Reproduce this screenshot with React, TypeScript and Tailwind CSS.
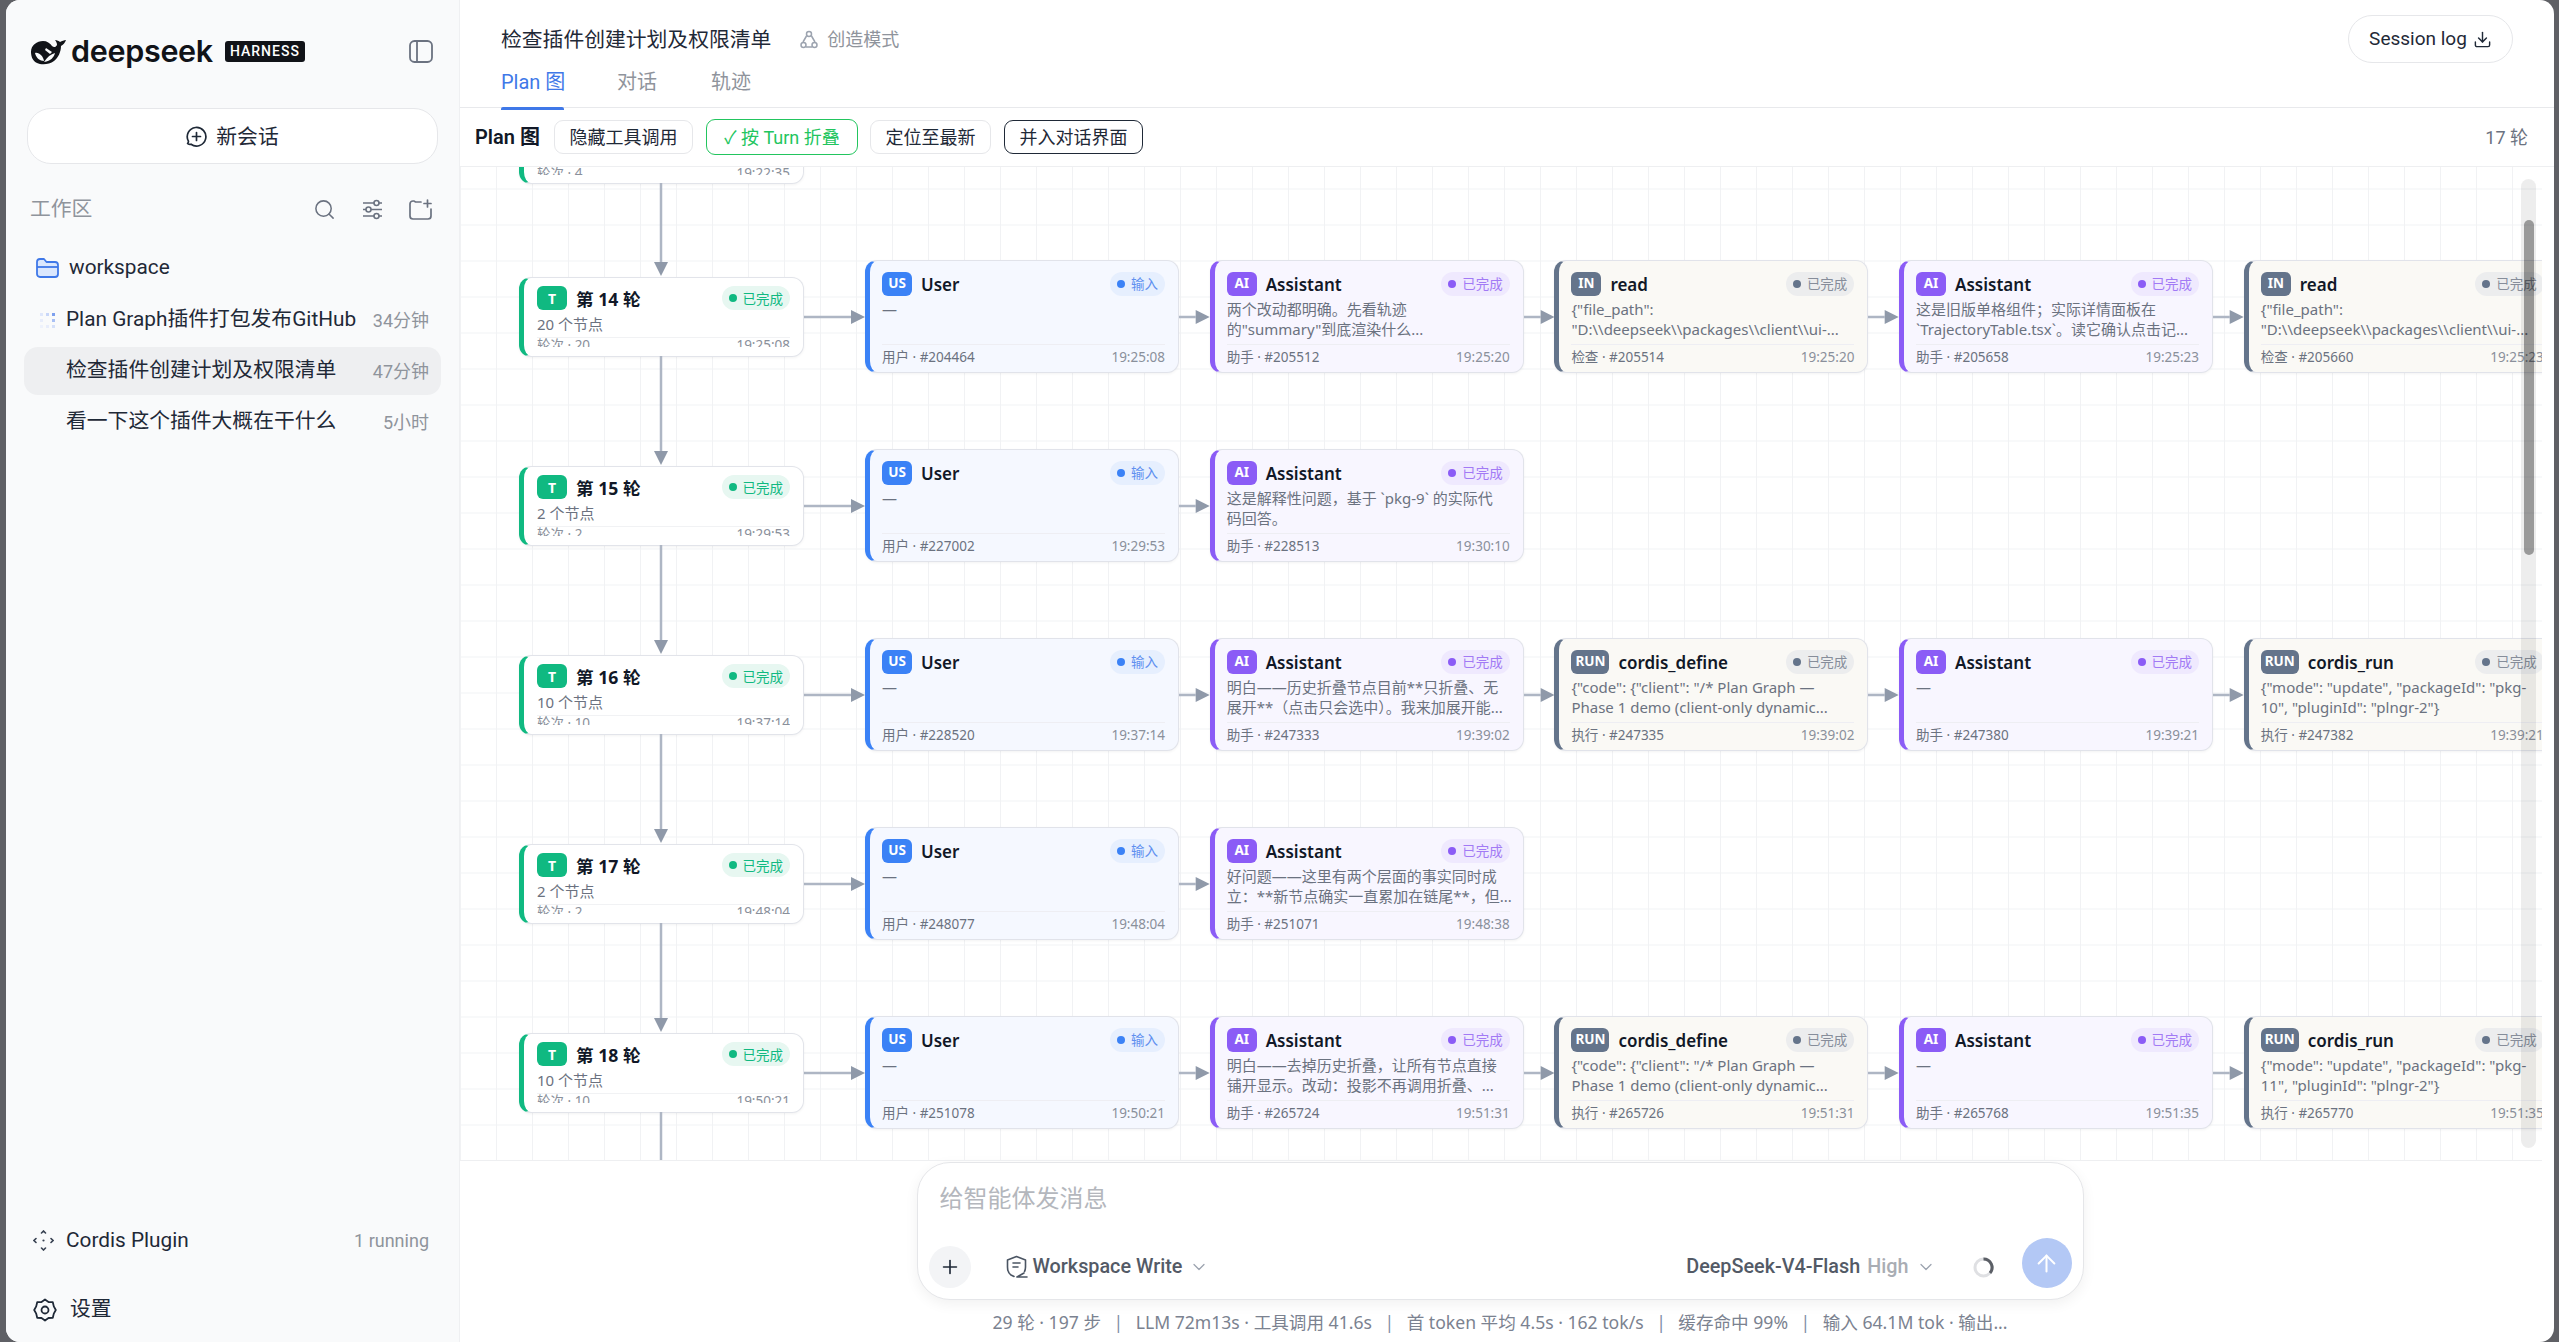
import { Download, Search, ChevronDown, Plus, ArrowUp } from "lucide-react";

type Kind = "user" | "ai" | "tool";

interface Step {
  kind: Kind;
  tag: string;
  title: string;
  lines: string[];
  label: string;
  id: string;
  time: string;
}

interface Turn {
  n: number;
  nodes: number;
  time: string;
  steps: Step[];
}

const kindStyles = {
  user: {
    card: "bg-[#f5f8ff] border-l-[#3b82f6]",
    tag: "bg-[#3b82f6]",
    pill: "bg-[#e6effe] text-[#5f8ff0]",
    dot: "bg-[#3b82f6]",
    status: "输入",
  },
  ai: {
    card: "bg-[#f8f6ff] border-l-[#8b5cf6]",
    tag: "bg-[#8b5cf6]",
    pill: "bg-[#efe9fe] text-[#a27af5]",
    dot: "bg-[#8b5cf6]",
    status: "已完成",
  },
  tool: {
    card: "bg-[#faf9f5] border-l-[#64748b]",
    tag: "bg-[#64748b]",
    pill: "bg-[#ecedee] text-[#868d9a]",
    dot: "bg-[#64748b]",
    status: "已完成",
  },
};

const user = (id: string, time: string): Step => ({
  kind: "user",
  tag: "US",
  title: "User",
  lines: ["—"],
  label: "用户",
  id,
  time,
});

const ai = (lines: string[], id: string, time: string): Step => ({
  kind: "ai",
  tag: "AI",
  title: "Assistant",
  lines,
  label: "助手",
  id,
  time,
});

const read = (id: string, time: string): Step => ({
  kind: "tool",
  tag: "IN",
  title: "read",
  lines: ['{"file_path":', '"D:\\\\deepseek\\\\packages\\\\client\\\\ui-...'],
  label: "检查",
  id,
  time,
});

const define = (id: string, time: string): Step => ({
  kind: "tool",
  tag: "RUN",
  title: "cordis_define",
  lines: ['{"code": {"client": "/* Plan Graph —', "Phase 1 demo (client-only dynamic..."],
  label: "执行",
  id,
  time,
});

const run = (pkg: string, id: string, time: string): Step => ({
  kind: "tool",
  tag: "RUN",
  title: "cordis_run",
  lines: ['{"mode": "update", "packageId": "pkg-', `${pkg}", "pluginId": "plngr-2"}`],
  label: "执行",
  id,
  time,
});

const turns: Turn[] = [
  { n: 13, nodes: 4, time: "19:22:35", steps: [] },
  {
    n: 14,
    nodes: 20,
    time: "19:25:08",
    steps: [
      user("#204464", "19:25:08"),
      ai(["两个改动都明确。先看轨迹", '的"summary"到底渲染什么...'], "#205512", "19:25:20"),
      read("#205514", "19:25:20"),
      ai(["这是旧版单格组件；实际详情面板在", "`TrajectoryTable.tsx`。读它确认点击记..."], "#205658", "19:25:23"),
      read("#205660", "19:25:23"),
    ],
  },
  {
    n: 15,
    nodes: 2,
    time: "19:29:53",
    steps: [
      user("#227002", "19:29:53"),
      ai(["这是解释性问题，基于 `pkg-9` 的实际代", "码回答。"], "#228513", "19:30:10"),
    ],
  },
  {
    n: 16,
    nodes: 10,
    time: "19:37:14",
    steps: [
      user("#228520", "19:37:14"),
      ai(["明白——历史折叠节点目前**只折叠、无", "展开**（点击只会选中）。我来加展开能..."], "#247333", "19:39:02"),
      define("#247335", "19:39:02"),
      ai(["—"], "#247380", "19:39:21"),
      run("10", "#247382", "19:39:21"),
    ],
  },
  {
    n: 17,
    nodes: 2,
    time: "19:48:04",
    steps: [
      user("#248077", "19:48:04"),
      ai(["好问题——这里有两个层面的事实同时成", "立：**新节点确实一直累加在链尾**，但..."], "#251071", "19:48:38"),
    ],
  },
  {
    n: 18,
    nodes: 10,
    time: "19:50:21",
    steps: [
      user("#251078", "19:50:21"),
      ai(["明白——去掉历史折叠，让所有节点直接", "铺开显示。改动：投影不再调用折叠、..."], "#265724", "19:51:31"),
      define("#265726", "19:51:31"),
      ai(["—"], "#265768", "19:51:35"),
      run("11", "#265770", "19:51:35"),
    ],
  },
];

function Whale() {
  return (
    <svg width="36" height="26" viewBox="0 0 36 26" className="shrink-0">
      <path
        fill="#111318"
        d="M1 13C1 6 7 2 13 2c4 0 7 2 9 5 2 2 4 1 5-1 0-2-1-4-2-5 2 0 4 1 5 2 2-1 4-2 6-2-1 3-3 5-5 6 0 6-3 12-7 15-5 4-13 4-17 2C3 22 1 18 1 13Z"
      />
      <path fill="#f9fafb" d="M5 14c4-1 8 3 9 8-4 0-8-3-9-8Z" />
      <path fill="#f9fafb" d="M16 9l6 4-2 2-5-4 1-2Z" />
      <path fill="#f9fafb" d="M14 23c3-5 7-8 11-9-1 4-4 8-11 9Z" />
    </svg>
  );
}

function HArrow({ width }: { width: number }) {
  return (
    <svg width={width} height="16" viewBox={`0 0 ${width} 16`} className="shrink-0">
      <line x1="0" y1="8" x2={width - 14} y2="8" stroke="#aeb6c4" strokeWidth="2.5" />
      <polygon points={`${width - 14},1 ${width},8 ${width - 14},15`} fill="#8f99a9" />
    </svg>
  );
}

function VArrow({ height, head = true }: { height: number; head?: boolean }) {
  return (
    <svg width="16" height={height} viewBox={`0 0 16 ${height}`} className="absolute left-1/2 top-full -ml-[10.5px]">
      <line x1="8" y1="0" x2="8" y2={height - (head ? 13 : 0)} stroke="#aeb6c4" strokeWidth="2.5" />
      {head && <polygon points={`1,${height - 14} 15,${height - 14} 8,${height}`} fill="#8f99a9" />}
    </svg>
  );
}

function TurnNode({ turn, arrow, head }: { turn: Turn; arrow: number; head: boolean }) {
  return (
    <div className="relative h-[80px] w-[285px] shrink-0 rounded-[12px] border-[1.5px] border-l-[5px] border-[#e2e4ea] border-l-[#10b981] bg-white pl-[13px] pr-[13px] pt-[8.5px] font-['Noto_Sans','Noto_Sans_CJK_SC',sans-serif] shadow-[0_1px_3px_rgba(0,0,0,0.05)]">
      <div className="h-[61px] overflow-hidden">
        <div className="flex h-[24px] items-center">
          <span className="flex h-[24px] w-[30px] items-center justify-center rounded-[6px] bg-[#10b981] text-[14px] font-bold text-white">
            T
          </span>
          <span className="ml-[9px] translate-y-[1.500px] text-[17.6px] font-bold leading-none text-[#111827]">
            第 {turn.n} 轮
          </span>
          <span className="ml-auto flex h-[24px] items-center gap-[6px] rounded-full bg-[#e7f7f1] px-[7px] text-[13.5px] text-[#10b981]">
            <i className="h-[8px] w-[8px] rounded-full bg-[#10b981]" />
            <span className="translate-y-[1px]">已完成</span>
          </span>
        </div>
        <div className="mt-[4px] text-[15px] leading-[20px] text-[#6b7280]">{turn.nodes} 个节点</div>
        <div className="mt-[3px] flex justify-between border-t border-[#f1f2f4] text-[13.5px] leading-[14px] text-[#8a909b]">
          <span>轮次 · {turn.nodes}</span>
          <span>{turn.time}</span>
        </div>
      </div>
      <VArrow height={arrow} head={head} />
    </div>
  );
}

function StepCard({ step }: { step: Step }) {
  const s = kindStyles[step.kind];
  return (
    <div
      className={`h-[113px] w-[314px] shrink-0 rounded-[12px] border-[1.5px] border-l-[5px] border-[#e1e3ea] pl-[12px] pr-[13px] pt-[10.5px] font-['Noto_Sans','Noto_Sans_CJK_SC',sans-serif] shadow-[0_1px_3px_rgba(0,0,0,0.05)] ${s.card}`}
    >
      <div className="flex h-[24px] items-center">
        <span
          className={`flex h-[24px] min-w-[30px] items-center justify-center rounded-[6px] px-[4px] text-[13.5px] font-bold text-white ${s.tag}`}
        >
          {step.tag}
        </span>
        <span className="ml-[9px] translate-y-[1px] text-[17px] font-semibold leading-none text-[#111827]">
          {step.title}
        </span>
        <span className={`ml-auto flex h-[24px] items-center gap-[6px] rounded-full px-[7px] text-[13.5px] ${s.pill}`}>
          <i className={`h-[8px] w-[8px] rounded-full ${s.dot}`} />
          <span className="translate-y-[1px]">{s.status}</span>
        </span>
      </div>
      <div className="mt-[3px] h-[41px] text-[15px] leading-[20px] text-[#6b7280]">
        {step.lines.map((line) => (
          <div key={line} className="whitespace-nowrap">
            {line}
          </div>
        ))}
      </div>
      <div className="mt-[4px] flex h-[26px] items-center justify-between border-t border-[#eeeef3] text-[13.5px] text-[#6b7280]">
        <span>
          {step.label} · {step.id}
        </span>
        <span className="text-[#8a909b]">{step.time}</span>
      </div>
    </div>
  );
}

function TurnRow({ turn, index }: { turn: Turn; index: number }) {
  const hasSteps = turn.steps.length > 0;
  const last = index === turns.length - 1;
  const arrow = last ? 60 : hasSteps ? 109 : 93;
  return (
    <div className={`flex items-center pl-[59px] ${hasSteps ? "h-[113px]" : "h-[80px]"} mb-[76px]`}>
      <TurnNode turn={turn} arrow={arrow} head={!last} />
      {hasSteps && <HArrow width={61} />}
      {turn.steps.map((step, i) => (
        <div key={step.id} className="flex items-center">
          {i > 0 && <HArrow width={30.7} />}
          <StepCard step={step} />
        </div>
      ))}
    </div>
  );
}

function Sidebar() {
  return (
    <aside className="flex w-[454px] shrink-0 flex-col border-r border-[#eff0f2] bg-[#f9fafb] text-[20.8px] text-[#1f2937]">
      <div className="flex h-[38px] shrink-0" />
      <div className="flex h-[27px] items-center pl-[24px] pr-[26px]">
        <Whale />
        <span className="ml-[5px] font-['Inter',sans-serif] text-[30.5px] font-semibold leading-none tracking-[-0.3px] text-[#111318]">
          deepseek
        </span>
        <span className="ml-[12px] flex h-[21px] items-center rounded-[3px] bg-[#111318] px-[5px] text-[14px] font-medium tracking-[1px] text-white">
          HARNESS
        </span>
        <svg width="24" height="23" viewBox="0 0 24 23" fill="none" stroke="#6b7280" strokeWidth="1.8" className="ml-auto">
          <rect x="1" y="1" width="22" height="21" rx="4.5" />
          <path d="M8 1v21" />
        </svg>
      </div>

      <button className="mx-[21px] mt-[43px] flex h-[56px] items-center justify-center gap-[9px] rounded-[24px] border border-[#e6e7ea] bg-white text-[20.8px] text-[#1f2937]">
        <svg width="21" height="21" viewBox="0 0 21 21" fill="none" stroke="#1f2937" strokeWidth="1.7" strokeLinecap="round">
          <path d="M5 18.2A9.3 9.3 0 1 0 2.4 15.2c.2.6-.2 1.5-.7 2.4.9.6 2.2.9 3.3.6Z" />
          <path d="M10.5 6.5v8M6.5 10.5h8" />
        </svg>
        <span className="translate-y-[2px]">新会话</span>
      </button>

      <div className="mt-[30px] flex h-[30px] items-center pl-[24px] pr-[27px]">
        <span className="translate-y-[1px] text-[20.8px] text-[#8f949c]">工作区</span>
        <Search className="ml-auto h-[23px] w-[23px] -translate-x-[1px] text-[#6b7280]" strokeWidth={1.6} />
        <svg width="21" height="21" viewBox="0 0 21 21" fill="none" stroke="#6b7280" strokeWidth="1.6" className="ml-[25px]">
          <path d="M1 4h11M17 4h3M1 10.500h3M9 10.500h11M1 17h11M17 17h3" />
          <circle cx="14.500" cy="4" r="2.500" />
          <circle cx="6.500" cy="10.500" r="2.500" />
          <circle cx="14.500" cy="17" r="2.500" />
        </svg>
        <svg width="23" height="21" viewBox="0 0 23 21" fill="none" stroke="#6b7280" strokeWidth="1.7" strokeLinecap="round" className="ml-[26px]">
          <path d="M12 3H6.500L5 2H4a3 3 0 0 0-3 3v12a3 3 0 0 0 3 3h15a3 3 0 0 0 3-3v-7" />
          <path d="M18.500 1v7M15 4.500h7" />
        </svg>
      </div>

      <div className="mt-[29px] flex h-[30px] items-center pl-[30px]">
        <svg width="23" height="20" viewBox="0 0 23 20" fill="#dbe7fd" stroke="#3f78e8" strokeWidth="1.8" strokeLinejoin="round">
          <path d="M1 4a3 3 0 0 1 3-3h4l2.500 3H19a3 3 0 0 1 3 3v9a3 3 0 0 1-3 3H4a3 3 0 0 1-3-3V4Z" />
          <path d="M1 9h21" fill="none" />
        </svg>
        <span className="ml-[10px]">workspace</span>
      </div>

      <div className="mt-[17px] flex h-[40px] items-center pl-[34px] pr-[30px]">
        <svg width="16" height="16" viewBox="0 0 16 16" className="mr-[10px] shrink-0">
          <rect x="0" y="1" width="3" height="3" fill="#dfe7fb" />
          <rect x="6" y="1" width="3" height="3" fill="#c8d6f8" />
          <rect x="12" y="1" width="3" height="3" fill="#7da0ee" />
          <rect x="0" y="7" width="3" height="3" fill="#e8edfb" />
          <rect x="12" y="7" width="3" height="3" fill="#a9c0f4" />
          <rect x="0" y="13" width="3" height="3" fill="#eef2fc" />
          <rect x="6" y="13" width="3" height="3" fill="#e8edfb" />
          <rect x="12" y="13" width="3" height="3" fill="#d5e0f9" />
        </svg>
        <span className="whitespace-nowrap">Plan Graph插件打包发布GitHub</span>
        <span className="ml-auto whitespace-nowrap text-[18px] text-[#8f949c]">34分钟</span>
      </div>
      <div className="mx-[18px] mt-[7px] flex h-[48px] items-center rounded-[14px] bg-[#eeeff1] pl-[42px] pr-[12px]">
        <span className="whitespace-nowrap">检查插件创建计划及权限清单</span>
        <span className="ml-auto whitespace-nowrap text-[18px] text-[#8f949c]">47分钟</span>
      </div>
      <div className="mt-[3px] flex h-[48px] items-center pl-[60px] pr-[30px]">
        <span className="whitespace-nowrap">看一下这个插件大概在干什么</span>
        <span className="ml-auto whitespace-nowrap text-[18px] text-[#8f949c]">5小时</span>
      </div>

      <div className="flex-1" />

      <div className="flex h-[30px] items-center pl-[27px] pr-[30px]">
        <svg width="21" height="21" viewBox="0 0 21 21" fill="none" stroke="#374151" strokeWidth="1.6" strokeLinecap="round" className="mr-[12px]">
          <path d="M8.500 3l2-2 2 2M8.500 18l2 2 2-2M3 8.500l-2 2 2 2M18 8.500l2 2-2 2" />
          <circle cx="10.500" cy="10.500" r="1.100" fill="#374151" stroke="none" />
        </svg>
        <span className="translate-y-[1px]">Cordis Plugin</span>
        <span className="ml-auto text-[18px] text-[#8f949c]">1 running</span>
      </div>
      <div className="mb-[17px] mt-[40px] flex h-[30px] items-center pl-[27px]">
        <svg width="24" height="24" viewBox="0 0 24 24" fill="none" stroke="#1f2937" strokeWidth="1.8" strokeLinejoin="round" className="mr-[13px]">
          <path d="M12 1.500l3.500 2.500 4.300.2 1 4.200 2 3.600-2 3.600-1 4.200-4.300.2-3.500 2.500-3.500-2.500-4.300-.2-1-4.200-2-3.600 2-3.600 1-4.200 4.300-.2Z" />
          <circle cx="12" cy="12" r="3.500" />
        </svg>
        <span>设置</span>
      </div>
    </aside>
  );
}

function Header() {
  return (
    <header className="flex h-[108px] shrink-0 flex-col border-b-[1.5px] border-[#e8e9ec] pl-[41px] pr-[41px]">
      <div className="flex h-[64px] shrink-0 items-start">
        <div className="flex items-center pt-[25px]">
          <span className="text-[20.8px] leading-[30px] text-[#1f2937]">检查插件创建计划及权限清单</span>
          <svg width="18" height="20" viewBox="0 0 18 20" fill="none" stroke="#9ca3af" strokeWidth="1.5" className="ml-[29px]">
            <circle cx="9" cy="4" r="2.500" />
            <circle cx="3.500" cy="15" r="2.500" />
            <circle cx="14.500" cy="15" r="2.500" />
            <path d="M6.500 6L3 12M11.500 6L15 12M6 17h6" />
          </svg>
          <span className="ml-[9px] text-[18px] leading-[30px] text-[#8f949c]">创造模式</span>
        </div>
        <button className="ml-auto mt-[15px] flex h-[48px] w-[165px] items-center justify-center gap-[6px] rounded-full border border-[#e6e7ea] bg-white text-[19px] text-[#1f2937]">
          Session log
          <Download className="h-[19px] w-[19px]" strokeWidth={1.8} />
        </button>
      </div>
      <div className="flex h-[44px] shrink-0 items-start text-[20px] leading-[36px]">
        <span className="relative h-[44px] w-[63px] whitespace-nowrap text-[#3f78e8]">
          Plan 图
          <i className="absolute bottom-[-1.500px] left-0 h-[3px] w-full rounded-t-[2px] bg-[#3f78e8]" />
        </span>
        <span className="ml-[53px] text-[#8f949c]">对话</span>
        <span className="ml-[54px] text-[#8f949c]">轨迹</span>
      </div>
    </header>
  );
}

function Toolbar() {
  const btn = "flex h-[34px] items-center justify-center rounded-[9px] border text-[18px] whitespace-nowrap";
  return (
    <div className="flex h-[59px] shrink-0 items-center border-b border-[#eeeff1] pl-[15px] pr-[26px]">
      <span className="mr-[13px] w-[66px] whitespace-nowrap text-[20px] font-semibold text-[#111827]">Plan 图</span>
      <button className={`${btn} w-[139px] border-[#e6e7ea] text-[#1f2937]`}>隐藏工具调用</button>
      <button className={`${btn} ml-[13px] h-[36px] w-[152px] border-[#22c55e] text-[#22c55e]`}>✓ 按 Turn 折叠</button>
      <button className={`${btn} ml-[12px] w-[121px] border-[#e6e7ea] text-[#1f2937]`}>定位至最新</button>
      <button className={`${btn} ml-[13px] w-[139px] border-[#1f2937] text-[#1f2937]`}>并入对话界面</button>
      <span className="ml-auto text-[18px] text-[#6b7280]">17 轮</span>
    </div>
  );
}

function Canvas() {
  return (
    <div className="relative mr-[12px] min-h-0 flex-1 overflow-hidden border-b border-[#eeeff1] bg-[linear-gradient(#f1f2f4_1px,transparent_1px),linear-gradient(90deg,#f1f2f4_1px,transparent_1px)] bg-[size:36px_36px] bg-[position:0_21.500px]">
      <div className="-mt-[63px]">
        {turns.map((turn, i) => (
          <TurnRow key={turn.n} turn={turn} index={i} />
        ))}
      </div>
      {/* scrollbar */}
      <div className="absolute bottom-[12px] right-[6px] top-[12px] w-[15px] rounded-full bg-black/[0.07]">
        <div className="absolute left-[2.500px] right-[2.500px] top-[41px] h-[335px] rounded-full bg-black/[0.35]" />
      </div>
    </div>
  );
}

function Composer() {
  const sep = <span className="mx-[12.500px] text-[#7f8fa6]">|</span>;
  return (
    <div className="flex h-[181px] shrink-0 flex-col items-center pr-[14px]">
      <div className="mt-[1px] flex h-[138px] w-[1167px] shrink-0 flex-col rounded-[33px] border border-[#e5e6e9] bg-white shadow-[0_4px_14px_rgba(0,0,0,0.06)]">
        <div className="pl-[22px] pt-[20px] text-[24px] leading-[32px] text-[#b4b7bd]">给智能体发消息</div>
        <div className="mt-[31px] flex h-[42px] items-center pl-[11px] pr-[11px]">
          <span className="flex h-[42px] w-[42px] items-center justify-center rounded-full bg-[#f3f4f6] text-[#1f2937]">
            <Plus className="h-[22px] w-[22px]" strokeWidth={1.8} />
          </span>
          <svg width="22" height="24" viewBox="0 0 22 24" fill="none" stroke="#4b5563" strokeWidth="1.6" strokeLinecap="round" strokeLinejoin="round" className="ml-[35px]">
            <path d="M8 21.500l-3-1.500C2 18 1.500 15 1.500 12V5l9-3.500 9 3.500v7c0 1.500-.2 3-1 4.500" />
            <path d="M7 8h7M7 12h5M11 22l7-4M12 22h9" />
          </svg>
          <span className="ml-[5px] text-[19.8px] font-medium text-[#535a66]">Workspace Write</span>
          <ChevronDown className="ml-[7px] h-[20px] w-[20px] text-[#9ca3af]" strokeWidth={1.5} />
          <span className="ml-auto text-[19.8px] font-medium text-[#535a66]">DeepSeek-V4-Flash</span>
          <span className="ml-[7px] text-[19.8px] font-medium text-[#a9adb4]">High</span>
          <ChevronDown className="ml-[7px] h-[20px] w-[20px] text-[#9ca3af]" strokeWidth={1.5} />
          <svg width="21" height="21" viewBox="0 0 21 21" fill="none" className="ml-[37px]">
            <circle cx="10.500" cy="10.500" r="8.500" stroke="#dfe0e3" strokeWidth="3" />
            <path d="M10.500 2a8.500 8.500 0 0 1 6.500 14" stroke="#5b5f66" strokeWidth="3" />
          </svg>
          <span className="ml-[28px] flex h-[50px] w-[50px] -translate-y-[4px] items-center justify-center rounded-full bg-[#b3c8f5] text-white">
            <ArrowUp className="h-[27px] w-[27px]" strokeWidth={1.8} />
          </span>
        </div>
      </div>
      <div className="mt-[10px] flex h-[24px] items-center whitespace-nowrap font-['Noto_Sans','Noto_Sans_CJK_SC',sans-serif] text-[17.600px] text-[#7b8290]">
        <span>29 轮 · 197 步</span>
        {sep}
        <span>LLM 72m13s · 工具调用 41.6s</span>
        {sep}
        <span>首 token 平均 4.5s · 162 tok/s</span>
        {sep}
        <span>缓存命中 99%</span>
        {sep}
        <span>输入 64.1M tok · 输出...</span>
      </div>
    </div>
  );
}

export default function App() {
  return (
    <div className="h-[1342px] w-[2559px] overflow-hidden bg-[#5f6065] pl-[6px] pr-[5px] font-['Roboto','Noto_Sans_CJK_SC',sans-serif]">
      <div className="flex h-full overflow-hidden rounded-[14px] bg-white">
        <Sidebar />
        <main className="flex min-w-0 flex-1 flex-col">
          <Header />
          <Toolbar />
          <Canvas />
          <Composer />
        </main>
      </div>
    </div>
  );
}
